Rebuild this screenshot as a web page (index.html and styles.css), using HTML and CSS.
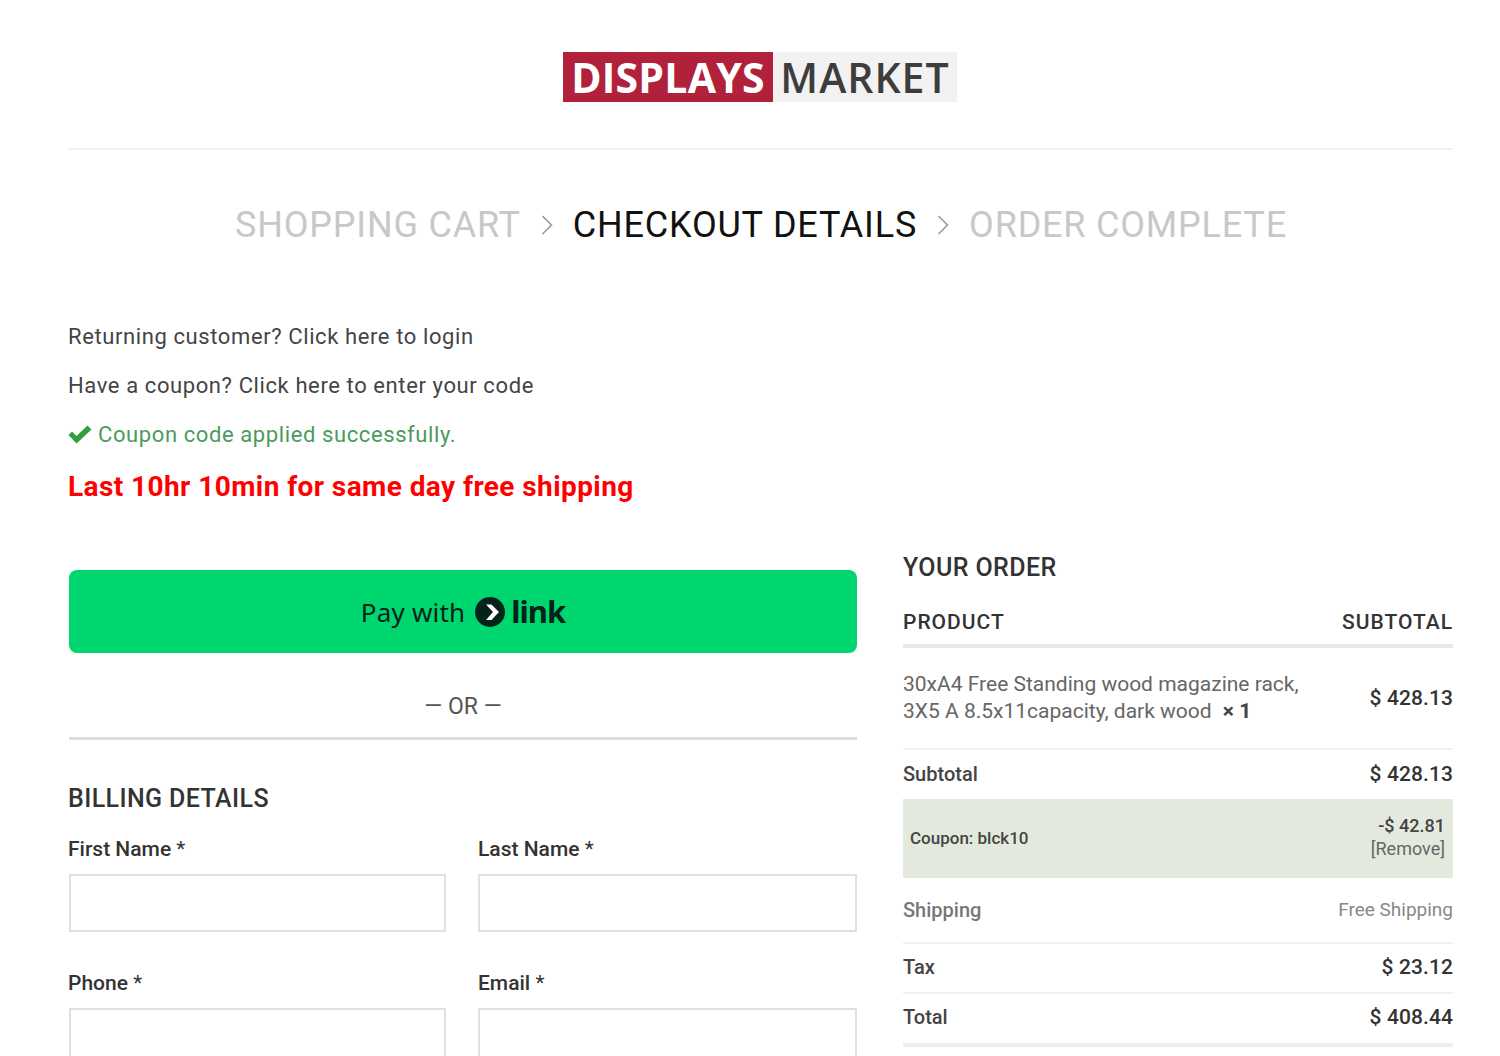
FILE: index.html
```html
<!DOCTYPE html>
<html lang="en">
<head>
<meta charset="utf-8">
<title>Checkout</title>
<link rel="stylesheet" href="styles.css">
</head>
<body>
<div class="page">
  <header class="site-header">
    <div class="logo"><span class="logo-red">DISPLAYS</span><span class="logo-grey">MARKET</span></div>
  </header>
  <nav class="steps">
    <span class="step">SHOPPING CART</span>
    <svg class="chev" width="12" height="24" viewBox="0 0 12 24"><path d="M1.5 3 L10.5 12 L1.5 21" fill="none" stroke="#9a9a9a" stroke-width="1.6"/></svg>
    <span class="step current">CHECKOUT DETAILS</span>
    <svg class="chev" width="12" height="24" viewBox="0 0 12 24"><path d="M1.5 3 L10.5 12 L1.5 21" fill="none" stroke="#9a9a9a" stroke-width="1.6"/></svg>
    <span class="step">ORDER COMPLETE</span>
  </nav>
  <section class="notices">
    <p class="notice">Returning customer? Click here to login</p>
    <p class="notice">Have a coupon? Click here to enter your code</p>
    <p class="notice success"><svg class="check" width="24" height="19" viewBox="0 0 24 19"><path d="M0.5 10 L4 6.5 L8.5 11 L19.5 0.5 L23.5 4.5 L8.5 18.5 Z" fill="#2f9e3f"/></svg>Coupon code applied successfully.</p>
    <p class="promo">Last 10hr 10min for same day free shipping</p>
  </section>
  <div class="columns">
    <main class="left">
      <a class="pay-btn">
        <span class="pay-text">Pay with</span>
        <svg class="link-mark" width="30" height="30" viewBox="0 0 30 30"><circle cx="15" cy="15" r="15" fill="#04231a"/><path d="M11 7.5 H16.5 L24 15 L16.5 23 H11 L18 15 Z" fill="#fff"/></svg>
        <span class="link-word">link</span>
      </a>
      <div class="or">— OR —</div>
      <h2 class="section-title">BILLING DETAILS</h2>
      <div class="fields">
        <div class="field"><label class="field-label">First Name <span class="req">*</span></label><div class="input"></div></div>
        <div class="field"><label class="field-label">Last Name <span class="req">*</span></label><div class="input"></div></div>
        <div class="field"><label class="field-label">Phone <span class="req">*</span></label><div class="input"></div></div>
        <div class="field"><label class="field-label">Email <span class="req">*</span></label><div class="input"></div></div>
      </div>
    </main>
    <aside class="right">
      <h2 class="order-title">YOUR ORDER</h2>
      <div class="order-head"><span>PRODUCT</span><span>SUBTOTAL</span></div>
      <div class="row product">
        <div class="product-name">30xA4 Free Standing wood magazine rack,<br>3X5 A 8.5x11capacity, dark wood <b class="qty">× 1</b></div>
        <div class="amount">$ 428.13</div>
      </div>
      <div class="row subtotal"><span class="label">Subtotal</span><span class="amount">$ 428.13</span></div>
      <div class="coupon">
        <span class="coupon-name">Coupon: blck10</span>
        <div class="coupon-right"><div class="coupon-amt">-$ 42.81</div><div class="coupon-remove">[Remove]</div></div>
      </div>
      <div class="row shipping"><span class="label muted">Shipping</span><span class="free">Free Shipping</span></div>
      <div class="row tax"><span class="label">Tax</span><span class="amount">$ 23.12</span></div>
      <div class="row total"><span class="label">Total</span><span class="amount">$ 408.44</span></div>
    </aside>
  </div>
</div>
</body>
</html>
```
FILE: styles.css
```css
* { box-sizing: border-box; }
html, body { margin: 0; height: 1056px; overflow: hidden; background: #fff; }
body { font-family: Roboto, "Liberation Sans", sans-serif; color: #444; }
.page { padding: 0 47px 0 69px; }
.site-header { height: 150px; padding-top: 52px; border-bottom: 2px solid #f0f0f0; display: flex; justify-content: center; }
.logo { display: flex; height: 50px; width: 394px; margin-left: -2px; font-family: "Open Sans", sans-serif; font-weight: 700; font-size: 41px; line-height: 50px; letter-spacing: .2px; }
.logo-red { width: 210px; background: #b2213b; color: #fff; text-align: center; }
.logo-grey { flex: 1; background: #f2f2f2; color: #3d3d3d; text-align: center; font-weight: 600; letter-spacing: 1px; }
.steps { display: flex; justify-content: center; align-items: center; gap: 20px; height: 150px; font-size: 36px; letter-spacing: .8px; }
.step { color: #c8c8c8; white-space: nowrap; }
.step.current { color: #111; }
.notices { font-size: 22px; letter-spacing: .6px; color: #444; margin: 23px 0 0 -1px; }
.notice { margin: 0 0 22px; line-height: 27px; }
.success { color: #4a9b5c; display: flex; align-items: center; gap: 6px; margin-bottom: 22px; letter-spacing: .6px; }
.promo { margin: 0; font-size: 28px; font-weight: 700; letter-spacing: .42px; color: #f00; line-height: 34px; }
.columns { display: grid; grid-template-columns: 788px 550px; column-gap: 46px; margin-top: 48px; }
.pay-btn { display: flex; align-items: center; justify-content: center; height: 83px; margin-top: 18px; background: #00d66f; border-radius: 8px; color: #04231a; gap: 10px; }
.pay-text { font-family: "Noto Sans", sans-serif; font-size: 26px; letter-spacing: .2px; }
.link-mark { flex: none; }
.link-word { font-family: "Noto Sans", sans-serif; font-weight: 700; font-size: 31px; line-height: 1; margin-left: -4px; letter-spacing: -1px; }
.or { height: 87px; display: flex; align-items: center; justify-content: center; padding-top: 22px; font-size: 23px; color: #555; border-bottom: 3px solid #ddd; }
.section-title { margin: 43px 0 0 -1px; font-size: 25px; letter-spacing: .4px; line-height: 32px; font-weight: 500; color: #333; }
.fields { display: grid; grid-template-columns: 377px 379px; column-gap: 32px; row-gap: 37px; margin-top: 20px; }
.field-label { display: block; font-size: 21px; font-weight: 500; line-height: 28px; color: #333; margin: 0 0 11px -1px; }
.field:nth-child(even) .field-label { margin-left: 0; }
.req { font-weight: 400; }
.input { height: 58px; border: 2px solid #e0e0e0; background: #fff; }
.order-title { margin: 0; font-size: 25px; letter-spacing: .4px; line-height: 32px; font-weight: 500; color: #333; }
.order-head { display: flex; justify-content: space-between; margin-top: 24px; height: 40px; font-size: 21px; font-weight: 500; letter-spacing: 1px; line-height: 28px; color: #333; border-bottom: 4px solid #e8e8e8; }
.row { display: flex; justify-content: space-between; align-items: center; border-bottom: 2px solid #f0f0f0; }
.product { height: 102px; }
.product-name { font-size: 21px; line-height: 27px; color: #666; }
.qty { color: #444; margin-left: 6px; }
.amount { font-size: 21px; font-weight: 500; color: #333; letter-spacing: .1px; }
.subtotal { height: 49px; border-bottom: 0; padding-bottom: 2px; }
.label { font-size: 20px; font-weight: 500; color: #444; }
.muted { color: #777; }
.coupon { display: flex; justify-content: space-between; align-items: center; height: 79px; background: #e4e9de; padding: 0 8px 2px 7px; }
.coupon-name { font-size: 17px; font-weight: 500; color: #444; }
.coupon-right { text-align: right; padding-bottom: 2px; }
.coupon-amt { font-size: 18px; font-weight: 500; line-height: 24px; color: #444; }
.coupon-remove { font-size: 18px; line-height: 21px; color: #666; }
.shipping { height: 66px; padding-bottom: 1px; }
.free { font-size: 19px; color: #888; }
.tax { height: 50px; padding-bottom: 2px; }
.total { height: 53px; border-bottom: 4px solid #eee; padding-bottom: 3px; }
```
